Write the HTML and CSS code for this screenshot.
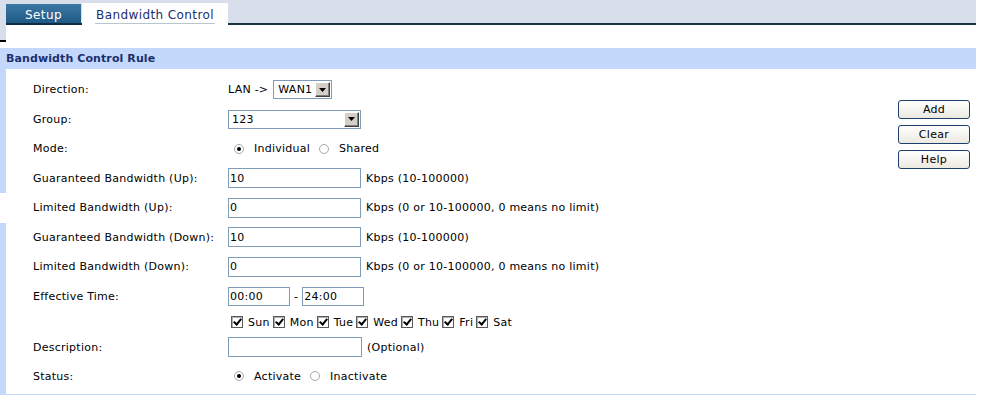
FILE: index.html
```html
<!DOCTYPE html>
<html>
<head>
    <title>Bandwidth Control</title>
    <link rel="stylesheet" href="styles.css">
</head>
<body>
    <div class="page">
        <div class="top">
            <div class="stub"></div>
            <div class="top-main">
                <div class="tabbar">
                    <a class="tab">Setup</a>
                    <a class="tab active"><span>Bandwidth Control</span></a>
                </div>
            </div>
        </div>

        <div class="rule-head">Bandwidth Control Rule</div>

        <div class="rule-body">
            <div class="rule-form">
                <div class="row">
                    <label>Direction:</label>
                    <div class="field">
                        <span class="dir-text">LAN -&gt;</span>
                        <span class="select wan">
                            <span class="value">WAN1</span>
                            <span class="arrow"><svg width="7" height="4" viewBox="0 0 7 4"><path d="M0 0h7L3.5 4z" fill="#000"/></svg></span>
                        </span>
                    </div>
                </div>
                <div class="row">
                    <label>Group:</label>
                    <div class="field">
                        <span class="select group">
                            <span class="value">123</span>
                            <span class="arrow"><svg width="7" height="4" viewBox="0 0 7 4"><path d="M0 0h7L3.5 4z" fill="#000"/></svg></span>
                        </span>
                    </div>
                </div>
                <div class="row">
                    <label>Mode:</label>
                    <div class="field radios">
                        <span class="radio checked"></span><span class="opt">Individual</span>
                        <span class="radio"></span><span class="opt">Shared</span>
                    </div>
                </div>
                <div class="row">
                    <label>Guaranteed Bandwidth (Up):</label>
                    <div class="field"><input class="text" type="text" value="10"><span class="hint">Kbps (10-100000)</span></div>
                </div>
                <div class="row no-bar">
                    <label>Limited Bandwidth (Up):</label>
                    <div class="field"><input class="text" type="text" value="0"><span class="hint">Kbps (0 or 10-100000, 0 means no limit)</span></div>
                </div>
                <div class="row">
                    <label>Guaranteed Bandwidth (Down):</label>
                    <div class="field"><input class="text" type="text" value="10"><span class="hint">Kbps (10-100000)</span></div>
                </div>
                <div class="row">
                    <label>Limited Bandwidth (Down):</label>
                    <div class="field"><input class="text" type="text" value="0"><span class="hint">Kbps (0 or 10-100000, 0 means no limit)</span></div>
                </div>
                <div class="row">
                    <label>Effective Time:</label>
                    <div class="field">
                        <input class="text time" type="text" value="00:00">
                        <span class="dash">-</span>
                        <input class="text time" type="text" value="24:00">
                    </div>
                </div>
                <div class="row days">
                    <label></label>
                    <div class="field day-list">
                        <span class="check"></span><span class="day">Sun</span>
                        <span class="check"></span><span class="day">Mon</span>
                        <span class="check"></span><span class="day">Tue</span>
                        <span class="check"></span><span class="day">Wed</span>
                        <span class="check"></span><span class="day">Thu</span>
                        <span class="check"></span><span class="day">Fri</span>
                        <span class="check"></span><span class="day">Sat</span>
                    </div>
                </div>
                <div class="row desc">
                    <label>Description:</label>
                    <div class="field"><input class="text wide" type="text" value=""><span class="hint">(Optional)</span></div>
                </div>
                <div class="row status">
                    <label>Status:</label>
                    <div class="field radios">
                        <span class="radio checked"></span><span class="opt">Activate</span>
                        <span class="radio"></span><span class="opt">Inactivate</span>
                    </div>
                </div>
            </div>

            <div class="actions">
                <button type="button">Add</button>
                <button type="button">Clear</button>
                <button type="button">Help</button>
            </div>
        </div>
    </div>
</body>
</html>
```

FILE: styles.css
```css
body {
    margin: 0;
    background-color: white;
    font-family: "DejaVu Sans", Verdana, sans-serif;
    font-size: 11px;
    letter-spacing: 0.25px;
    color: #000;
}
.page {
    width: 976px;
}
.top {
    display: flex;
    height: 48px;
}
.stub {
    width: 6px;
    height: 40px;
    background-color: #d9dfea;
    border-bottom: 2px solid #000;
}
.top-main {
    flex: 1;
}
.tabbar {
    display: flex;
    align-items: flex-end;
    height: 23px;
    background-color: #d9dfea;
    border-bottom: 2px solid #173443;
}
.tab {
    display: block;
    margin-bottom: -2px;
    font-size: 12px;
    letter-spacing: 0.4px;
    text-align: center;
    box-sizing: border-box;
}
.tab:first-child {
    width: 75px;
    height: 21px;
    padding-top: 4px;
    line-height: 15px;
    color: white;
    background: linear-gradient(#3c78a4, #1f5a86);
    border-bottom: 2px solid #0e2c44;
}
.tab.active {
    width: 146px;
    height: 22px;
    margin-left: 1px;
    padding-top: 5px;
    background-color: white;
    color: #1b2f6e;
}
.tab.active span {
    display: inline-block;
    line-height: 15px;
    padding: 0 1px;
    border-bottom: 1px solid #b8c6ce;
}
.rule-head {
    height: 21px;
    line-height: 21px;
    padding-left: 6px;
    background-color: #c4d8fc;
    color: #1b2f6e;
    font-weight: bold;
    letter-spacing: 0.1px;
}
.rule-body {
    display: flex;
    border-bottom: 2px solid #c4d8fc;
}
.rule-form {
    flex: 1;
    padding-top: 6px;
    padding-bottom: 3px;
    border-left: 6px solid #c4d8fc;
}
.row {
    display: flex;
    align-items: center;
    height: 29.5px;
}
.row.no-bar {
    margin-left: -6px;
    border-left: 6px solid white;
}
.row.days {
    height: 22px;
}
.row.desc {
    height: 28px;
}
.row.status {
    height: 30px;
}
.row label {
    width: 195px;
    padding-left: 27px;
    flex-shrink: 0;
}
.field {
    display: flex;
    align-items: center;
}
.text {
    box-sizing: border-box;
    width: 133px;
    height: 20px;
    margin: 0;
    padding: 0 1px;
    border: 1px solid #7f9db9;
    font-family: "DejaVu Sans", Verdana, sans-serif;
    font-size: 11px;
    letter-spacing: 0.25px;
    color: #000;
    outline: none;
}
.text.time {
    width: 62px;
    height: 19px;
}
.text.wide {
    width: 134px;
}
.dash {
    margin: 0 4px;
}
.hint {
    margin-left: 5px;
}
.dir-text {
    margin-right: 5px;
}
.select {
    display: flex;
    align-items: center;
    box-sizing: border-box;
    height: 19px;
    border: 1px solid #7f9db9;
    background-color: white;
}
.select.wan {
    width: 59px;
}
.select.group {
    width: 133px;
}
.select .value {
    flex: 1;
    padding-left: 3px;
}
.select.wan .value {
    padding-left: 4px;
}
.select .arrow {
    display: flex;
    align-items: center;
    justify-content: center;
    box-sizing: border-box;
    width: 15px;
    height: 15px;
    margin-right: 1px;
    background-color: #d4d0c8;
    border-top: 1px solid #fff;
    border-left: 1px solid #fff;
    border-right: 1px solid #404040;
    border-bottom: 1px solid #404040;
    box-shadow: inset -1px -1px 0 #808080;
}
.radios {
    padding-left: 6px;
}
.radio {
    position: relative;
    box-sizing: border-box;
    width: 10px;
    height: 10px;
    border: 1px solid #a8a8a8;
    border-radius: 50%;
    background-color: white;
}
.radio.checked::after {
    content: "";
    position: absolute;
    left: 2px;
    top: 2px;
    width: 4px;
    height: 4px;
    border-radius: 50%;
    background-color: #000;
}
.opt {
    margin-left: 10px;
    margin-right: 9px;
}
.day-list {
    padding-left: 3px;
}
.check {
    position: relative;
    box-sizing: border-box;
    width: 12px;
    height: 12px;
    border: 1px solid #5a5a5a;
    box-shadow: inset 1px 1px 0 #b0b0b0;
    background-color: white;
}
.check::after {
    content: "";
    position: absolute;
    left: 3px;
    top: 0px;
    width: 3px;
    height: 6px;
    border-right: 2px solid #000;
    border-bottom: 2px solid #000;
    transform: rotate(40deg);
}
.day {
    margin-left: 5px;
    margin-right: 3px;
}
.actions {
    display: flex;
    flex-direction: column;
    gap: 6px;
    padding-top: 31px;
    margin-right: 6px;
}
.actions button {
    width: 72px;
    height: 19px;
    padding: 0;
    border: 1px solid #1c3f6e;
    border-radius: 3px;
    background: linear-gradient(#ffffff, #ece9e0);
    font-family: "DejaVu Sans", Verdana, sans-serif;
    font-size: 11px;
    letter-spacing: 0.3px;
    color: #000;
}
```
